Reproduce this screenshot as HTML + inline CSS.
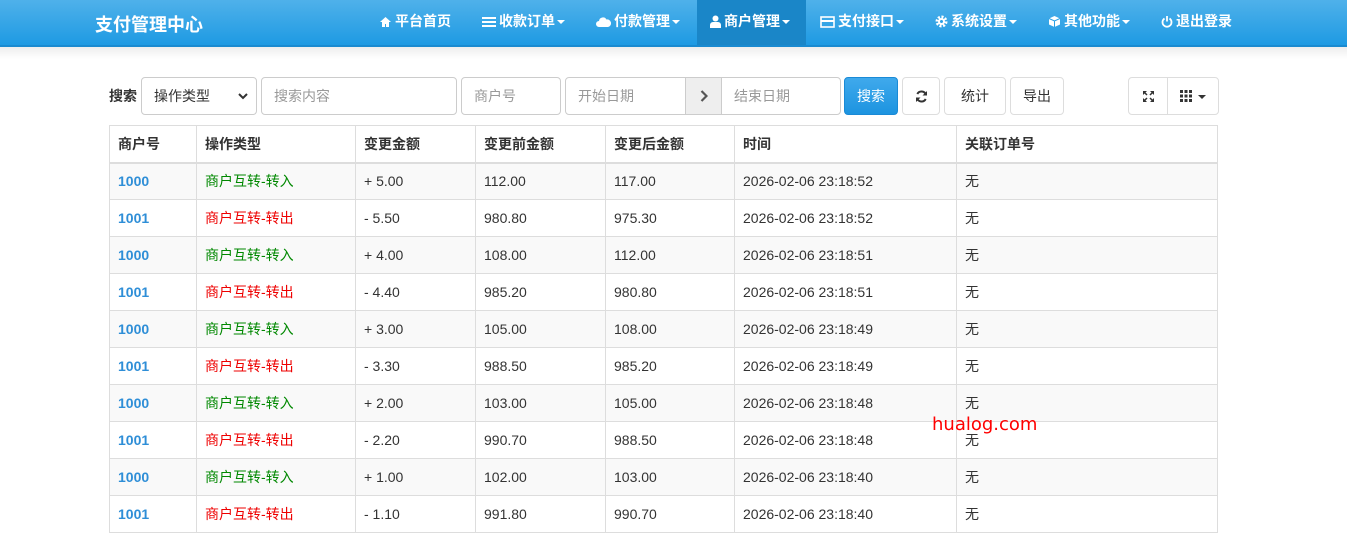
<!DOCTYPE html>
<html><head><meta charset="utf-8"><style>
*{box-sizing:border-box;margin:0;padding:0}
body{width:1347px;height:533px;overflow:hidden;background:#fff;font-family:"Liberation Sans","Noto Sans CJK SC",sans-serif;font-size:14px;color:#333;position:relative}
.nav{position:absolute;left:0;top:0;width:1347px;height:47px;background:linear-gradient(#4fb1ea,#1e9ae3);border-bottom:2px solid #1a8ad0}
.brand{position:absolute;left:95px;top:11px;color:#fff;font-size:18px;font-weight:bold}
.ni{position:absolute;top:0;height:45px;line-height:43px;color:#fff;font-size:14px;font-weight:bold;white-space:nowrap}
.ni svg{vertical-align:-2px;margin-right:3px}
.car{display:inline-block;width:0;height:0;border-left:4px solid transparent;border-right:4px solid transparent;border-top:4px solid #fff;vertical-align:2px;margin-left:2px}
.shadow{position:absolute;top:47px;left:0;width:1347px;height:12px;background:linear-gradient(#eee,#fff)}
.box{position:absolute;top:77px;height:38px;border:1px solid #ccc;border-radius:4px;background:#fff;line-height:36px;color:#999;padding-left:12px}
.btn{position:absolute;top:77px;height:38px;border:1px solid #ddd;border-radius:4px;background:#fff;line-height:36px;text-align:center;color:#333}
table{position:absolute;left:109px;top:125px;width:1109px;border-collapse:collapse;table-layout:fixed}
td,th{border:1px solid #ddd;height:37px;padding:0 8px;text-align:left;font-size:14px;white-space:nowrap}
th{font-weight:bold;border-bottom:2px solid #ddd;height:37px}
tr:nth-child(odd) td{background:#f9f9f9}
.id{color:#2e8ed7;font-weight:bold}
.g{color:#080}.r{color:#e00}
.wm{position:absolute;left:932px;top:414px;color:#f00;font-size:18px;font-family:"DejaVu Sans",sans-serif}
</style></head><body>
<div class="nav">
<div class="brand">支付管理中心</div>
<div class="ni" style="left:379px"><svg width="13" height="12" viewBox="0 0 13 12"><path d="M6.5 1L1 6h2v5h3V8h1v3h3V6h2z" fill="#fff"/></svg>平台首页</div>
<div class="ni" style="left:482px"><svg width="14" height="12" viewBox="0 0 14 12"><rect x="0" y="1" width="14" height="2" fill="#fff"/><rect x="0" y="5" width="14" height="2" fill="#fff"/><rect x="0" y="9" width="14" height="2" fill="#fff"/></svg>收款订单<span class="car"></span></div>
<div class="ni" style="left:596px"><svg width="15" height="12" viewBox="0 0 15 12"><path d="M3 11a3 3 0 010-6 4 4 0 017.5-1.5A3.5 3.5 0 0112 11z" fill="#fff"/></svg>付款管理<span class="car"></span></div>
<div class="ni" style="left:697px;width:109px;background:#1a86c8;padding-left:13px"><svg width="11" height="13" viewBox="0 0 11 13"><circle cx="5.5" cy="3.5" r="3" fill="#fff"/><path d="M0 13v-3a3 3 0 013-3h5a3 3 0 013 3v3z" fill="#fff"/></svg>商户管理<span class="car"></span></div>
<div class="ni" style="left:820px"><svg width="15" height="12" viewBox="0 0 15 12"><rect x="1" y="1" width="13" height="10" fill="none" stroke="#fff" stroke-width="1.6"/><rect x="1" y="4" width="13" height="2" fill="#fff"/></svg>支付接口<span class="car"></span></div>
<div class="ni" style="left:935px"><svg width="13" height="13" viewBox="0 0 13 13"><circle cx="6.5" cy="6.5" r="4.5" fill="none" stroke="#fff" stroke-width="3" stroke-dasharray="2 1.5"/><circle cx="6.5" cy="6.5" r="3.5" fill="#fff"/><circle cx="6.5" cy="6.5" r="1.5" fill="#2aa0e5"/></svg>系统设置<span class="car"></span></div>
<div class="ni" style="left:1048px"><svg width="13" height="13" viewBox="0 0 13 13"><path d="M6.5 1L12 3.5v6L6.5 12 1 9.5v-6z" fill="#fff"/><path d="M1 3.5L6.5 6 12 3.5M6.5 6v6" stroke="#2aa0e5" fill="none"/></svg>其他功能<span class="car"></span></div>
<div class="ni" style="left:1161px"><svg width="12" height="13" viewBox="0 0 12 13"><path d="M3.5 3.5a4.5 4.5 0 105 0" fill="none" stroke="#fff" stroke-width="1.8"/><path d="M6 1v5.5" stroke="#fff" stroke-width="1.8"/></svg>退出登录</div>
</div>
<div class="shadow"></div>
<div style="position:absolute;left:109px;top:86px;font-weight:bold">搜索</div>
<div class="box" style="left:141px;width:116px;color:#333">操作类型<svg style="position:absolute;right:8px;top:15px" width="10" height="7" viewBox="0 0 10 7"><path d="M1 1l4 4 4-4" stroke="#333" stroke-width="2" fill="none"/></svg></div>
<div class="box" style="left:261px;width:196px">搜索内容</div>
<div class="box" style="left:461px;width:100px">商户号</div>
<div class="box" style="left:565px;width:121px;border-radius:4px 0 0 4px">开始日期</div>
<div class="box" style="left:685px;width:37px;background:#eee;border-radius:0;padding:0;text-align:center"><svg width="8" height="12" viewBox="0 0 8 12" style="vertical-align:-1px"><path d="M1.5 1l5 5-5 5" stroke="#555" stroke-width="2.2" fill="none"/></svg></div>
<div class="box" style="left:721px;width:120px;border-radius:0 4px 4px 0">结束日期</div>
<div class="btn" style="left:844px;width:54px;background:linear-gradient(#3fa9ec,#1d94e0);border-color:#1a8ad6;color:#fff">搜索</div>
<div class="btn" style="left:902px;width:38px"><svg width="13" height="13" viewBox="0 0 13 13" style="vertical-align:-2px"><path d="M11 5A4.7 4.7 0 002.3 4M2 8a4.7 4.7 0 008.7 1" stroke="#333" stroke-width="2" fill="none"/><path d="M12 1v4.5H7.5zM1 12V7.5h4.5z" fill="#333"/></svg></div>
<div class="btn" style="left:944px;width:62px">统计</div>
<div class="btn" style="left:1010px;width:54px">导出</div>
<div class="btn" style="left:1128px;width:40px;border-radius:4px 0 0 4px"><svg width="13" height="13" viewBox="0 0 13 13" style="vertical-align:-2px"><path d="M1 1h4L1 5zM12 1H8l4 4zM1 12h4L1 8zM12 12H8l4-4z" fill="#333"/><path d="M2 2l3 3M11 2L8 5M2 11l3-3M11 11L8 8" stroke="#333" stroke-width="1.5"/></svg></div>
<div class="btn" style="left:1167px;width:52px;border-radius:0 4px 4px 0"><svg width="12" height="12" viewBox="0 0 12 12" style="vertical-align:-1px"><g fill="#333"><rect x="0" y="0" width="3" height="3"/><rect x="4.5" y="0" width="3" height="3"/><rect x="9" y="0" width="3" height="3"/><rect x="0" y="4.5" width="3" height="3"/><rect x="4.5" y="4.5" width="3" height="3"/><rect x="9" y="4.5" width="3" height="3"/><rect x="0" y="9" width="3" height="3"/><rect x="4.5" y="9" width="3" height="3"/><rect x="9" y="9" width="3" height="3"/></g></svg> <span class="car" style="border-top-color:#333"></span></div>
<table>
<colgroup><col style="width:87px"><col style="width:159px"><col style="width:120px"><col style="width:130px"><col style="width:129px"><col style="width:222px"><col style="width:261px"></colgroup>
<thead><tr><th>商户号</th><th>操作类型</th><th>变更金额</th><th>变更前金额</th><th>变更后金额</th><th>时间</th><th>关联订单号</th></tr></thead>
<tbody>
<tr><td class="id">1000</td><td class="g">商户互转-转入</td><td>+ 5.00</td><td>112.00</td><td>117.00</td><td>2026-02-06 23:18:52</td><td>无</td></tr>
<tr><td class="id">1001</td><td class="r">商户互转-转出</td><td>- 5.50</td><td>980.80</td><td>975.30</td><td>2026-02-06 23:18:52</td><td>无</td></tr>
<tr><td class="id">1000</td><td class="g">商户互转-转入</td><td>+ 4.00</td><td>108.00</td><td>112.00</td><td>2026-02-06 23:18:51</td><td>无</td></tr>
<tr><td class="id">1001</td><td class="r">商户互转-转出</td><td>- 4.40</td><td>985.20</td><td>980.80</td><td>2026-02-06 23:18:51</td><td>无</td></tr>
<tr><td class="id">1000</td><td class="g">商户互转-转入</td><td>+ 3.00</td><td>105.00</td><td>108.00</td><td>2026-02-06 23:18:49</td><td>无</td></tr>
<tr><td class="id">1001</td><td class="r">商户互转-转出</td><td>- 3.30</td><td>988.50</td><td>985.20</td><td>2026-02-06 23:18:49</td><td>无</td></tr>
<tr><td class="id">1000</td><td class="g">商户互转-转入</td><td>+ 2.00</td><td>103.00</td><td>105.00</td><td>2026-02-06 23:18:48</td><td>无</td></tr>
<tr><td class="id">1001</td><td class="r">商户互转-转出</td><td>- 2.20</td><td>990.70</td><td>988.50</td><td>2026-02-06 23:18:48</td><td>无</td></tr>
<tr><td class="id">1000</td><td class="g">商户互转-转入</td><td>+ 1.00</td><td>102.00</td><td>103.00</td><td>2026-02-06 23:18:40</td><td>无</td></tr>
<tr><td class="id">1001</td><td class="r">商户互转-转出</td><td>- 1.10</td><td>991.80</td><td>990.70</td><td>2026-02-06 23:18:40</td><td>无</td></tr>
</tbody></table>
<div class="wm">hualog.com</div>
</body></html>
